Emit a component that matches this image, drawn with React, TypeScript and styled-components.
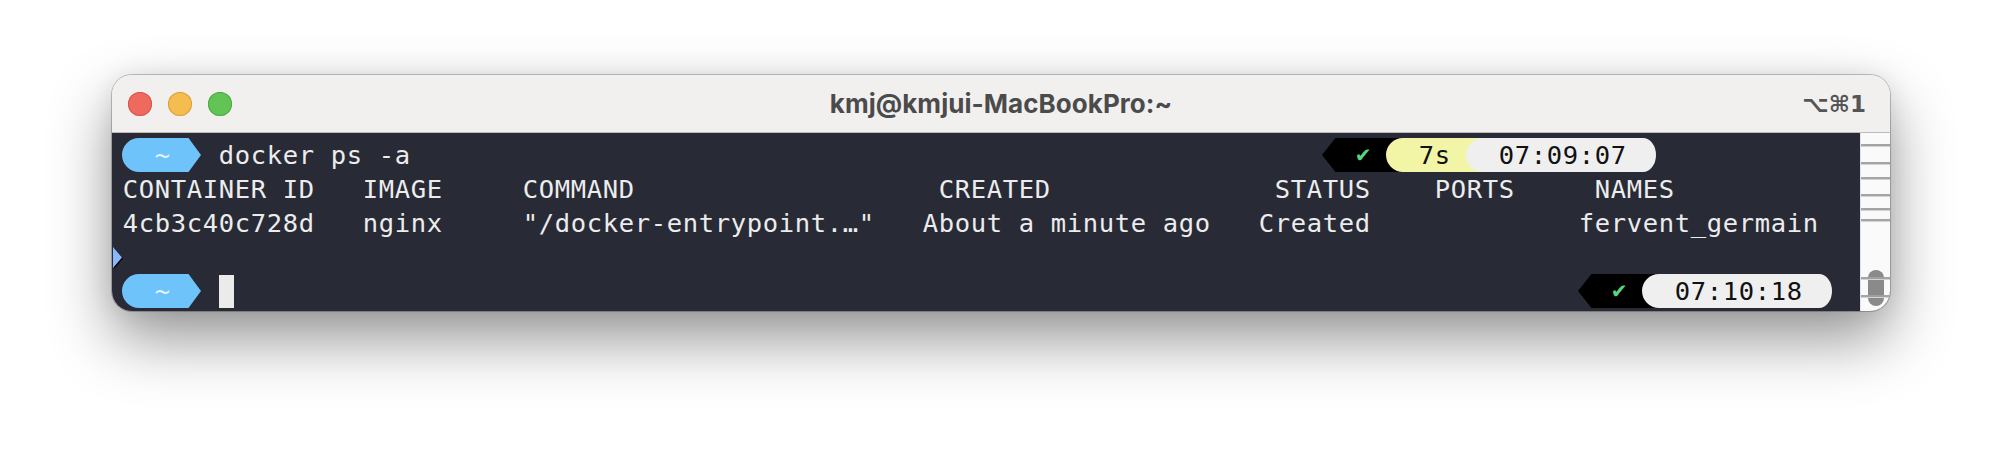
import styled, { createGlobalStyle } from 'styled-components';

const CELL = 16.0;
const LINE = 34;
const MONO_SIZE = 25.5;
const TERM_BG = '#282a36';
const TERM_FG = '#ececec';
const BLUE = '#6ec3fa';
const YELLOW = '#f3f5a6';
const LIGHT = '#efefef';
const GREEN = '#5ad67c';

const GlobalStyle = createGlobalStyle`
  html, body {
    margin: 0;
    padding: 0;
    background: #ffffff;
  }
  body {
    font-family: "Inter", "Liberation Sans", sans-serif;
  }
`;

const Page = styled.div`
  padding: 75px 0 0 112px;
  height: 460px;
  box-sizing: border-box;
  overflow: hidden;
`;

const Window = styled.div`
  width: 1778px;
  border-radius: 20px;
  overflow: hidden;
  background: #f0efee;
  box-shadow: 0 0 0 1px rgba(0, 0, 0, 0.22), 0 28px 62px rgba(0, 0, 0, 0.42),
    0 0 24px rgba(0, 0, 0, 0.08);
`;

const TitleBar = styled.div`
  display: grid;
  grid-template-columns: 1fr auto 1fr;
  align-items: center;
  height: 57px;
  border-bottom: 1px solid #bdbcbb;
  background: #f1f0ef;
`;

const Lights = styled.div`
  display: flex;
  gap: 16px;
  padding-left: 16px;
`;

const Light = styled.span<{ $color: string; $ring: string }>`
  width: 24px;
  height: 24px;
  border-radius: 50%;
  background: ${p => p.$color};
  box-shadow: inset 0 0 0 1px ${p => p.$ring};
`;

const Title = styled.div`
  font-family: "Inter", "Liberation Sans", sans-serif;
  font-weight: 700;
  font-size: 26px;
  color: #4b4b4b;
  letter-spacing: 0.05px;
`;

const Shortcut = styled.div`
  justify-self: end;
  padding-right: 24px;
  font-family: "DejaVu Sans", sans-serif;
  font-weight: 700;
  font-size: 23px;
  color: #555555;
`;

const Body = styled.div`
  display: flex;
  height: 178px;
  background: ${TERM_BG};
`;

const Screen = styled.div`
  flex: 1;
  padding: 5px 0 0 10.7px;
  display: flex;
  flex-direction: column;
`;

const Line = styled.div`
  position: relative;
  display: flex;
  align-items: center;
  width: ${CELL * 108}px;
  height: ${LINE}px;
  font-family: "DejaVu Sans Mono", "Liberation Mono", monospace;
  font-size: ${MONO_SIZE}px;
  letter-spacing: ${CELL - MONO_SIZE * 0.60205}px;
  line-height: ${LINE}px;
  color: ${TERM_FG};
  white-space: pre;
`;

const Text = styled.span<{ $color?: string }>`
  color: ${p => p.$color || 'inherit'};
`;

const Segment = styled.span<{ $bg: string; $fg: string }>`
  display: inline-block;
  height: ${LINE}px;
  background: ${p => p.$bg};
  color: ${p => p.$fg};
`;

const Check = styled.span`
  display: inline-block;
  width: ${CELL}px;
  text-align: center;
  vertical-align: top;
  font-family: "DejaVu Sans", sans-serif;
  font-size: 20px;
  letter-spacing: 0;
  color: ${GREEN};
`;

const Spacer = styled.span`
  flex: 1;
`;

const Pad = styled.span<{ $cols: number }>`
  width: ${p => p.$cols * CELL}px;
  flex-shrink: 0;
`;

const Cursor = styled.span`
  width: ${CELL - 0.5}px;
  height: ${LINE - 1}px;
  background: #ebebeb;
`;

const Mark = styled.svg`
  position: absolute;
  left: -10px;
  top: 7px;
  width: 9px;
  height: 21px;
  filter: drop-shadow(1px 1px 0 #000);
`;

const CapSvg = styled.svg<{ $bg: string }>`
  display: block;
  flex-shrink: 0;
  width: ${CELL}px;
  height: ${LINE}px;
  overflow: visible;
  background: ${p => p.$bg};
`;

const Scrollbar = styled.div`
  position: relative;
  width: 30px;
  background: #fafafa;
  border-left: 1px solid #e4e4e4;
  box-sizing: border-box;
`;

const Thumb = styled.div`
  position: absolute;
  left: 7px;
  top: 137px;
  width: 16px;
  height: 36px;
  border-radius: 8px;
  background: #8a8a8a;
`;

const ScrollMark = styled.div`
  position: absolute;
  left: 0;
  right: 0;
  height: 2px;
  background: rgba(160, 160, 160, 0.95);
  border-bottom: 1px solid rgba(215, 215, 215, 0.9);
`;

type CapKind = 'roundLeft' | 'roundRight' | 'arrowRight' | 'arrowLeft';

const capPaths: Record<CapKind, string> = {
  roundLeft: `M${CELL} 0 A17 17 0 0 0 ${CELL} ${LINE} Z`,
  roundRight: `M0 0 A13 17 0 0 1 0 ${LINE} Z`,
  arrowRight: `M0 0 H1.5 L14 17 L1.5 ${LINE} H0 Z`,
  arrowLeft: `M${CELL} 0 H12.5 L-1 17 L12.5 ${LINE} H${CELL} Z`,
};

const Cap = ({ kind, fill, bg = 'transparent' }: { kind: CapKind; fill: string; bg?: string }) => (
  <CapSvg $bg={bg} viewBox={`0 0 ${CELL} ${LINE}`}>
    <path d={capPaths[kind]} fill={fill} />
  </CapSvg>
);

const DirPrompt = () => (
  <>
    <Cap kind="roundLeft" fill={BLUE} />
    <Segment $bg={BLUE} $fg="#e6f3ff">{' ~ '}</Segment>
    <Cap kind="arrowRight" fill={BLUE} />
  </>
);

const StatusPrompt = ({ time, duration }: { time: string; duration?: string }) => (
  <>
    <Cap kind="arrowLeft" fill="#000" />
    <Segment $bg="#000" $fg={GREEN}>
      {' '}
      <Check>✔</Check>
      {' '}
    </Segment>
    {duration && (
      <>
        <Cap kind="roundLeft" fill={YELLOW} bg="#000" />
        <Segment $bg={YELLOW} $fg="#111">{` ${duration} `}</Segment>
      </>
    )}
    <Cap kind="roundLeft" fill={LIGHT} bg={duration ? YELLOW : '#000'} />
    <Segment $bg={LIGHT} $fg="#111">{` ${time} `}</Segment>
    <Cap kind="roundRight" fill={LIGHT} />
  </>
);

const header =
  'CONTAINER ID   IMAGE     COMMAND                   CREATED              STATUS    PORTS     NAMES';
const row =
  '4cb3c40c728d   nginx     "/docker-entrypoint.…"   About a minute ago   Created             fervent_germain';

const marks = [11, 29, 44, 61, 75, 86, 144, 162];

export default function App() {
  return (
    <>
      <GlobalStyle />
      <Page>
        <Window>
          <TitleBar>
            <Lights>
              <Light $color="#ee6a5f" $ring="#d5574c" />
              <Light $color="#f5bd4f" $ring="#d9a13c" />
              <Light $color="#61c454" $ring="#4fa942" />
            </Lights>
            <Title>kmj@kmjui-MacBookPro:~</Title>
            <Shortcut>⌥⌘1</Shortcut>
          </TitleBar>
          <Body>
            <Screen>
              <Line>
                <DirPrompt />
                <Text> docker ps -a</Text>
                <Spacer />
                <StatusPrompt duration="7s" time="07:09:07" />
                <Pad $cols={12} />
              </Line>
              <Line>
                <Text>{header}</Text>
              </Line>
              <Line>
                <Text>{row}</Text>
              </Line>
              <Line>
                <Mark viewBox="0 0 9 21">
                  <path d="M0 0 L9 10.5 L0 21 Z" fill="#8ab8fa" />
                </Mark>
              </Line>
              <Line>
                <DirPrompt />
                <Text> </Text>
                <Cursor />
                <Spacer />
                <StatusPrompt time="07:10:18" />
                <Pad $cols={1} />
              </Line>
            </Screen>
            <Scrollbar>
              <Thumb />
              {marks.map(y => (
                <ScrollMark key={y} style={{ top: y }} />
              ))}
            </Scrollbar>
          </Body>
        </Window>
      </Page>
    </>
  );
}
